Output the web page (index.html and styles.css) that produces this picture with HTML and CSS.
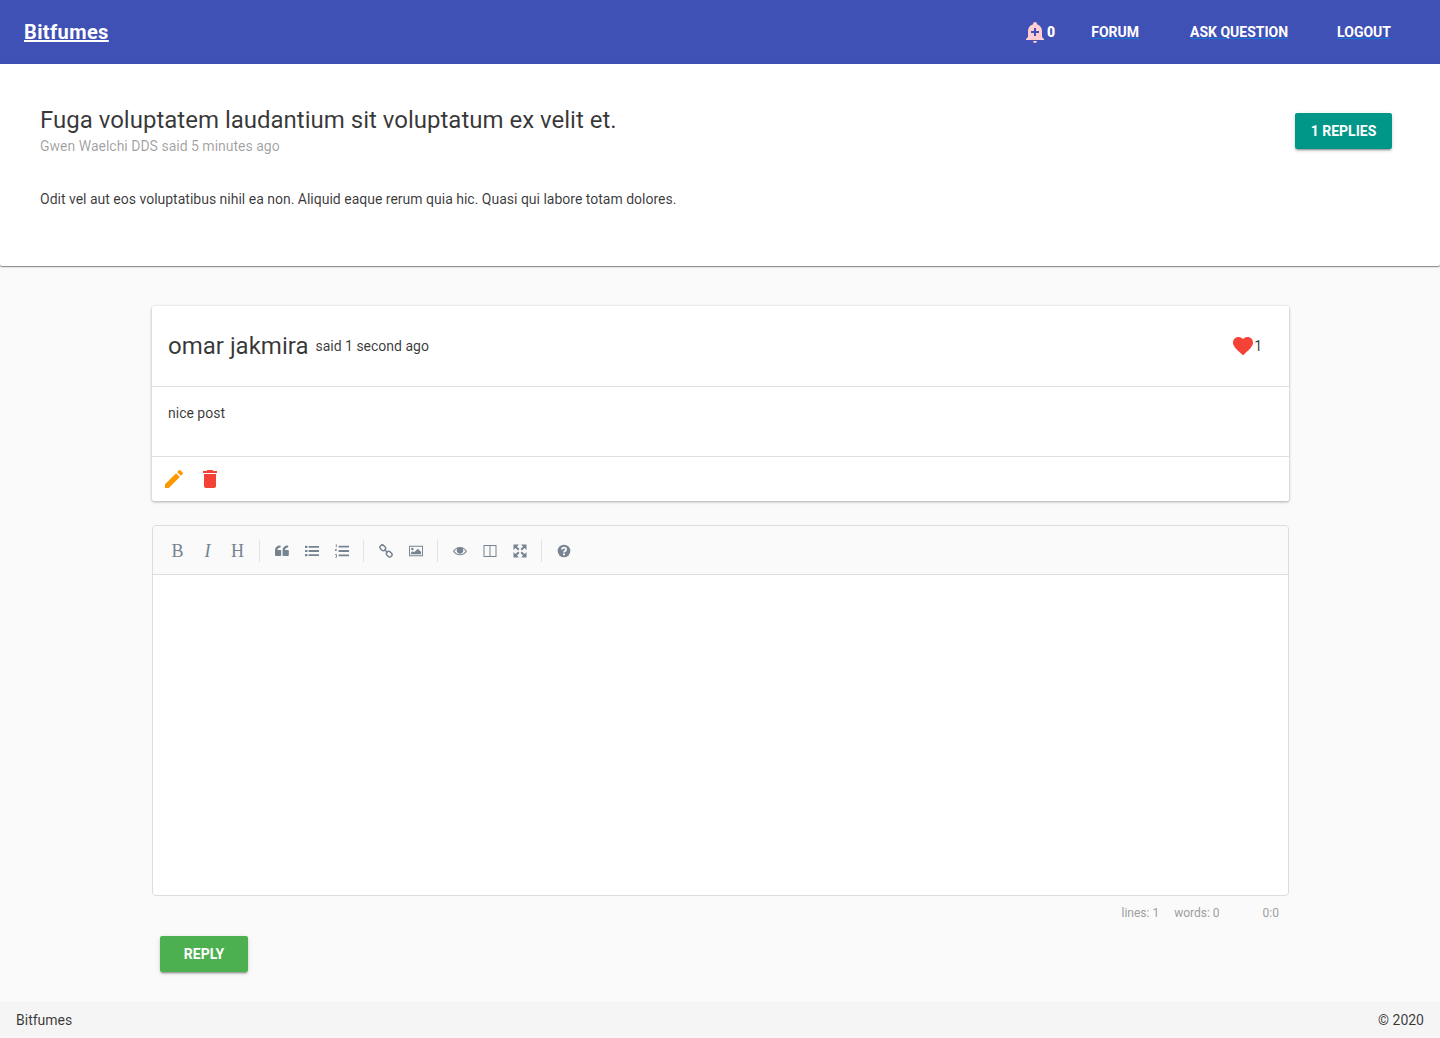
FILE: index.html
```html
<!DOCTYPE html>
<html lang="en">
<head>
    <meta charset="UTF-8">
    <meta name="viewport" content="width=device-width, initial-scale=1.0">
    <title>Bitfumes Forum</title>
    <link rel="stylesheet" href="styles.css">
</head>
<body>
    <header class="toolbar">
        <a class="brand" href="#">Bitfumes</a>
        <div class="nav">
            <span class="notify">
                <svg class="bell" viewBox="0 0 24 24"><path d="M10,21H14A2,2 0 0,1 12,23A2,2 0 0,1 10,21M21,19V20H3V19L5,17V11C5,7.9 7.03,5.18 10,4.29C10,4.19 10,4.1 10,4A2,2 0 0,1 12,2A2,2 0 0,1 14,4C14,4.1 14,4.19 14,4.29C16.97,5.18 19,7.9 19,11V17L21,19M16,11H13V8H11V11H8V13H11V16H13V13H16V11Z"/></svg>
                <b>0</b>
            </span>
            <a class="nav-forum" href="#">FORUM</a>
            <a class="nav-ask" href="#">ASK QUESTION</a>
            <a class="nav-logout" href="#">LOGOUT</a>
        </div>
    </header>

    <section class="question">
        <div class="question-head">
            <div>
                <h1>Fuga voluptatem laudantium sit voluptatum ex velit et.</h1>
                <div class="question-meta">Gwen Waelchi DDS said 5 minutes ago</div>
            </div>
            <button class="btn btn-teal" type="button">1 REPLIES</button>
        </div>
        <p class="question-body">Odit vel aut eos voluptatibus nihil ea non. Aliquid eaque rerum quia hic. Quasi qui labore totam dolores.</p>
    </section>

    <main class="content">
        <article class="reply">
            <div class="reply-head">
                <span class="reply-name">omar jakmira</span>
                <span class="reply-time">said 1 second ago</span>
                <span class="likes">
                    <svg class="heart" viewBox="0 0 24 24"><path d="M12 21.35l-1.45-1.32C5.4 15.36 2 12.28 2 8.5 2 5.42 4.42 3 7.5 3c1.74 0 3.41.81 4.5 2.09C13.09 3.81 14.76 3 16.5 3 19.58 3 22 5.42 22 8.5c0 3.78-3.4 6.86-8.55 11.54L12 21.35z"/></svg>
                    1
                </span>
            </div>
            <div class="reply-body">nice post</div>
            <div class="reply-actions">
                <svg class="act act-edit" viewBox="0 0 24 24"><path d="M3 17.25V21h3.75L17.81 9.94l-3.75-3.75L3 17.25zM20.71 7.04c.39-.39.39-1.02 0-1.41l-2.34-2.34c-.39-.39-1.02-.39-1.41 0l-1.83 1.83 3.75 3.75 1.83-1.83z"/></svg>
                <svg class="act act-delete" viewBox="0 0 24 24"><path d="M6 19c0 1.1.9 2 2 2h8c1.1 0 2-.9 2-2V7H6v12zM19 4h-3.5l-1-1h-5l-1 1H5v2h14V4z"/></svg>
            </div>
        </article>

        <div class="editor">
            <div class="editor-tools">
                <span class="tool tool-text tool-b">B</span>
                <span class="tool tool-text tool-i">I</span>
                <span class="tool tool-text">H</span>
                <i class="sep"></i>
                <span class="tool"><svg viewBox="0 0 14 14"><path d="M6.200 7.500v3.500a1 1 0 0 1-1 1H1a1 1 0 0 1-1-1V6.500C0 3.500 2 1.500 5.200 1.500h.4v2.100h-.4C3.600 3.600 2.600 4.500 2.500 6h2.700a1 1 0 0 1 1 1.500zM13.800 7.500v3.500a1 1 0 0 1-1 1H8.600a1 1 0 0 1-1-1V6.500c0-3 2-5 5.200-5h.4v2.100h-.4c-1.600 0-2.600.9-2.700 2.400h2.700a1 1 0 0 1 1 1.500z"/></svg></span>
                <span class="tool"><svg viewBox="0 0 14 14"><path d="M0 1.800h2.400v2.200H0zM0 5.900h2.400v2.200H0zM0 10h2.400v2.200H0zM3.600 2h10.400v1.800H3.600zM3.600 6.100h10.400v1.800H3.600zM3.600 10.200h10.400v1.800H3.600z"/></svg></span>
                <span class="tool"><svg viewBox="0 0 14 14"><path d="M.8.300h.9v3H.8zM0 5.200h2v.7H.9v.5H2v.7H0zM0 10.300h2v3.200H0v-.6h1.200v-.7H.4v-.5h.8v-.7H0zM3.600 1.700h10.400v1.800H3.600zM3.600 6.100h10.400v1.800H3.600zM3.600 10.500h10.400v1.800H3.600z"/></svg></span>
                <i class="sep"></i>
                <span class="tool"><svg viewBox="0 0 14 14" class="line"><rect x="-3" y="-2.300" width="6" height="4.600" rx="2.300" transform="translate(3.800 3.800) rotate(45)"/><rect x="-3" y="-2.300" width="6" height="4.600" rx="2.300" transform="translate(10.200 10.200) rotate(45)"/><path d="M5.500 5.500L8.500 8.500"/></svg></span>
                <span class="tool"><svg viewBox="0 0 15 12"><path fill-rule="evenodd" d="M0 .500h15v11H0zM1 1.500v9h13v-9z"/><circle cx="3.600" cy="3.800" r="1.300"/><path d="M2 9.500V7.800l2-1.500 1.500 1L9.500 3.500 13 7v2.500z"/></svg></span>
                <i class="sep"></i>
                <span class="tool"><svg viewBox="0 0 14 14"><path fill-rule="evenodd" d="M0 7.200C1.500 4.700 4 3 7 3s5.500 1.700 7 4.200C12.500 9.700 10 11.300 7 11.300S1.500 9.700 0 7.200zM1.300 7.200C2.600 9.100 4.700 10.300 7 10.300s4.400-1.200 5.700-3.100C11.900 6 10.900 5.100 9.700 4.600 10.100 5.100 10.300 5.800 10.300 6.500 10.300 8.400 8.900 9.800 7 9.800S3.700 8.400 3.700 6.500C3.700 5.800 3.900 5.100 4.300 4.600 3.100 5.100 2.100 6 1.300 7.200z"/></svg></span>
                <span class="tool"><svg viewBox="0 0 14 14"><path fill-rule="evenodd" d="M.5 1h13v12H.5zM1.500 2v10h5V2zM7.500 2v10h5V2z"/></svg></span>
                <span class="tool"><svg viewBox="0 0 14 14"><path d="M.5.500h5.500L.5 6zM13.500.500V6L8 .500zM.5 13.500V8L6 13.500zM13.500 13.500H8L13.500 8z"/><path class="bar" d="M2.500 2.500L5.800 5.800M11.500 2.500L8.200 5.800M2.500 11.500L5.800 8.200M11.500 11.500L8.200 8.200"/></svg></span>
                <i class="sep"></i>
                <span class="tool"><svg viewBox="0 0 14 14"><circle cx="7" cy="7" r="6.300"/><path class="help-mark" d="M4.900 5.500C5 4.300 5.900 3.700 7 3.700s2.100.7 2.100 1.800C9.100 7 7 7 7 8.600"/><rect class="help-dot" x="6" y="9.500" width="2" height="1.800"/></svg></span>
            </div>
            <div class="editor-area"></div>
        </div>
        <div class="editor-status">
            <span class="st-lines">lines: 1</span>
            <span class="st-words">words: 0</span>
            <span class="st-cursor">0:0</span>
        </div>
        <button class="btn btn-green" type="button">REPLY</button>
    </main>

    <footer class="footer">
        <span>Bitfumes</span>
        <span>© 2020</span>
    </footer>
</body>
</html>
```

FILE: styles.css
```css
html, body {
    height: 100%;
}
body {
    margin: 0;
    display: flex;
    flex-direction: column;
    min-height: 1038px;
    font-family: Roboto, sans-serif;
    font-size: 14px;
    line-height: 20px;
    color: rgba(0, 0, 0, 0.78);
    background-color: #fafafa;
}

/* top bar */
.toolbar {
    display: flex;
    align-items: center;
    justify-content: space-between;
    height: 64px;
    padding: 0 24px;
    background-color: #3f51b5;
    color: white;
}
.brand {
    color: white;
    font-size: 20px;
    font-weight: 700;
    letter-spacing: 0.02em;
}
.nav {
    display: flex;
    align-items: center;
    font-weight: 700;
    font-size: 14px;
}
.nav a {
    color: white;
    text-decoration: underline;
    text-decoration-color: #1976d2;
}
.notify {
    display: flex;
    align-items: center;
    margin-right: 36px;
}
.bell {
    width: 24px;
    height: 24px;
    fill: #ffcdd2;
}
.nav-forum {
    margin-right: 51px;
}
.nav-ask {
    margin-right: 49px;
}
.nav-logout {
    margin-right: 25px;
}

/* question */
.question {
    height: 202px;
    box-sizing: border-box;
    padding: 40px 48px 0 40px;
    background: white;
    border-radius: 0 0 2px 2px;
    box-shadow: 0 1px 1px rgba(0, 0, 0, 0.4), 0 1px 3px rgba(0, 0, 0, 0.12);
}
.question-head {
    display: flex;
    justify-content: space-between;
    align-items: flex-start;
}
h1 {
    margin: 0;
    font-size: 24px;
    font-weight: 400;
    line-height: 32px;
}
.question-meta {
    color: rgba(0, 0, 0, 0.38);
}
.question-body {
    margin: 33px 0 0;
}

/* replies */
.content {
    flex: 1;
    padding: 40px 151px 0 152px;
}
.reply {
    background: white;
    border-radius: 2px;
    box-shadow: 0 1px 3px rgba(0, 0, 0, 0.3), 0 0 2px rgba(0, 0, 0, 0.08);
}
.reply-head {
    display: flex;
    align-items: center;
    height: 80px;
    padding: 0 27px 0 16px;
    border-bottom: 1px solid #e0e0e0;
}
.reply-name {
    font-size: 24px;
    margin-right: 8px;
}
.reply-time {
    margin-left: -1px;
}
.likes {
    display: flex;
    align-items: center;
    margin-left: auto;
}
.heart {
    width: 24px;
    height: 24px;
    fill: #f44336;
    margin-right: -1px;
}
.reply-body {
    height: 70px;
    box-sizing: border-box;
    padding: 16px;
    border-bottom: 1px solid #e0e0e0;
}
.reply-actions {
    display: flex;
    align-items: center;
    height: 44px;
    padding-left: 10px;
}
.act {
    width: 24px;
    height: 24px;
}
.act-edit {
    fill: #ff9800;
    margin-right: 12px;
}
.act-delete {
    fill: #f44336;
}

/* editor */
.editor {
    margin-top: 24px;
    border: 1px solid #dddddd;
    border-radius: 4px;
    background: white;
}
.editor-tools {
    display: flex;
    align-items: center;
    height: 49px;
    box-sizing: border-box;
    padding: 1px 0 0 10px;
    background: #fafafa;
    border-bottom: 1px solid #dddddd;
    border-radius: 4px 4px 0 0;
}
.tool {
    display: flex;
    align-items: center;
    justify-content: center;
    width: 30px;
    height: 30px;
    color: #768390;
}
.tool svg {
    width: 14px;
    height: 14px;
    fill: #768390;
}
.tool svg.line {
    fill: none;
    stroke: #768390;
    stroke-width: 1.5;
}
.tool svg .bar {
    fill: none;
    stroke: #768390;
    stroke-width: 2;
}
.help-mark {
    fill: none;
    stroke: #fafafa;
    stroke-width: 1.8;
}
.tool svg .help-dot {
    fill: #fafafa;
}
.tool-text {
    box-sizing: border-box;
    padding-right: 1px;
    font-family: "Liberation Serif", serif;
    font-size: 18px;
}
.tool-i {
    font-style: italic;
}
.sep {
    width: 1px;
    height: 22px;
    margin: 0 7px 0 6px;
    background: #e3e3e3;
}
.editor-area {
    height: 320px;
}
.editor-status {
    display: flex;
    height: 32px;
    box-sizing: border-box;
    align-items: center;
    padding: 2px 10px 0 0;
    justify-content: flex-end;
    font-size: 12px;
    color: #9e9e9e;
}
.st-lines {
    margin-right: 15px;
}
.st-words {
    margin-right: 43px;
}
.btn {
    height: 36px;
    padding: 0 0 1px;
    border: none;
    border-radius: 2px;
    color: white;
    font-family: Roboto, sans-serif;
    font-size: 14px;
    font-weight: 700;
    box-shadow: 0 3px 1px -2px rgba(0, 0, 0, 0.2), 0 2px 2px 0 rgba(0, 0, 0, 0.14), 0 1px 5px 0 rgba(0, 0, 0, 0.12);
}
.btn-teal {
    width: 97px;
    background-color: #009688;
    margin-top: 9px;
}
.btn-green {
    background-color: #4caf50;
    width: 88px;
    margin: 8px 0 0 8px;
    display: block;
}

.footer {
    display: flex;
    justify-content: space-between;
    align-items: center;
    height: 36px;
    padding: 0 16px;
    background-color: #f5f5f5;
}
```
